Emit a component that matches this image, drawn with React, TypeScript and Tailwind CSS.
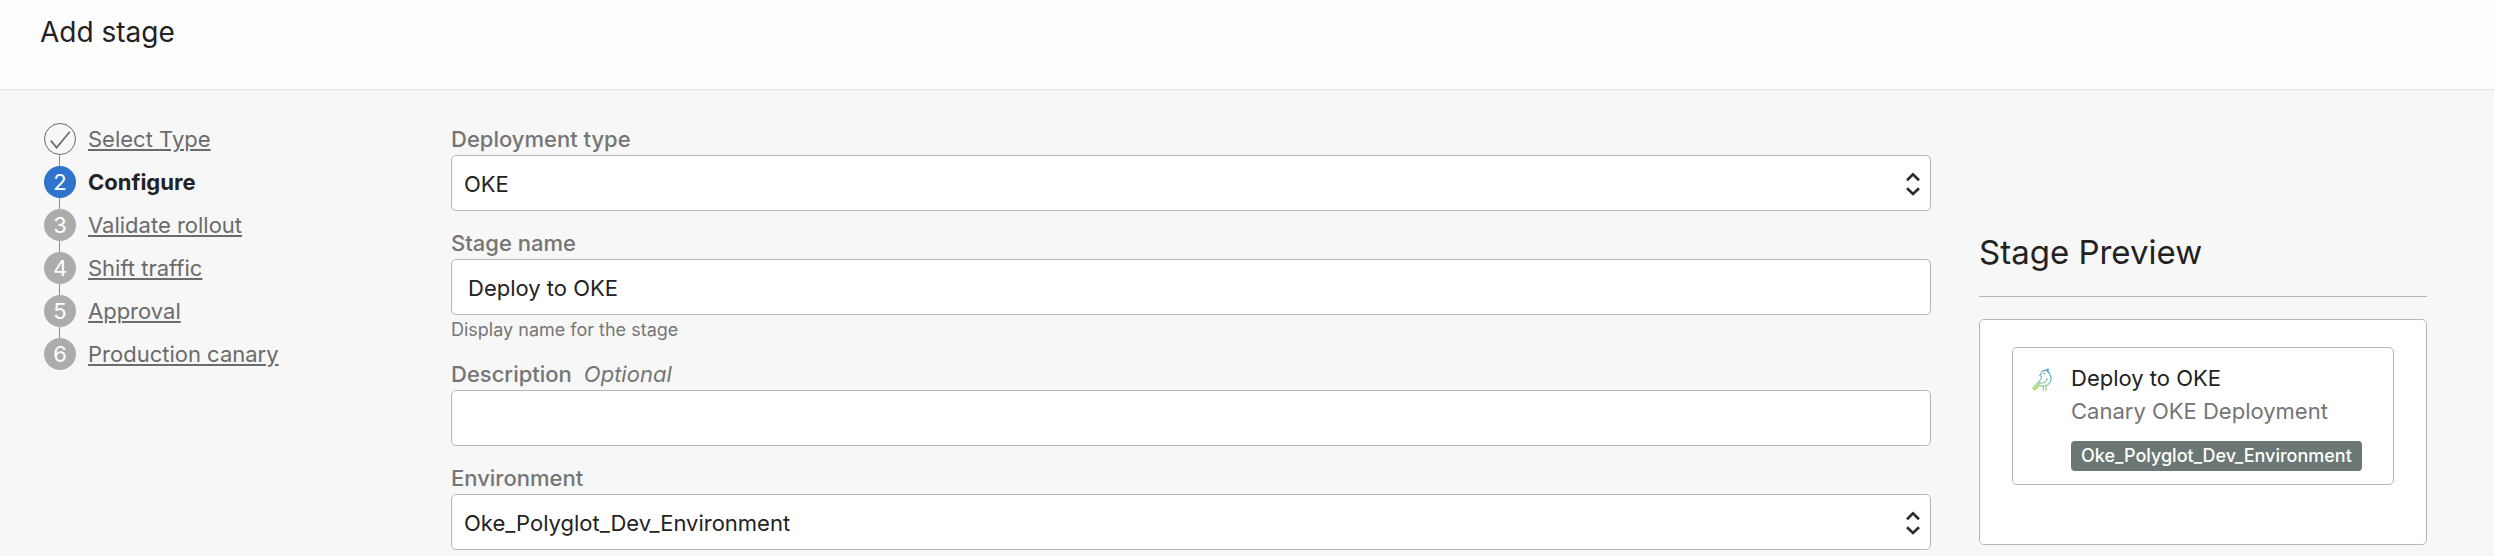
import React, { useState } from "react";

const steps = ["Select Type", "Configure", "Validate rollout", "Shift traffic", "Approval", "Production canary"];

function StepMarker({ index, current }: { index: number; current: number }) {
  if (index < current) {
    return (
      <svg viewBox="0 0 32 32" className="size-8 shrink-0" fill="none" stroke="#6b6b6b" aria-label="Completed">
        <circle cx="16" cy="16" r="15.5" />
        <path d="M6.8 17.6 L12.6 24.6 L25.8 8.8" strokeWidth="1.7" />
      </svg>
    );
  }
  const tone = index === current ? "bg-[#2e73cc]" : "bg-[#acacac]";
  return (
    <span className={`flex size-8 shrink-0 items-center justify-center rounded-full text-[22px] leading-8 text-white ${tone}`}>
      {index + 1}
    </span>
  );
}

function Steps({ current }: { current: number }) {
  return (
    <nav aria-label="Stage steps" className="w-[407px] shrink-0">
      <ol>
        {steps.map((step, i) => (
          <li key={step}>
            {i > 0 && <div className="ml-[15px] h-[11px] w-px bg-[#8c8c8c]" />}
            <div className="flex items-center gap-3">
              <StepMarker index={i} current={current} />
              {i === current ? (
                <span aria-current="step" className="text-[22px] leading-8 font-bold text-[#222]">{step}</span>
              ) : (
                <a href="#" className="text-[22px] leading-8 text-[#6b6b6b] underline">{step}</a>
              )}
            </div>
          </li>
        ))}
      </ol>
    </nav>
  );
}

const fieldBox =
  "block h-14 w-full rounded-[5px] border border-[#b3b8bf] bg-white pt-0.5 text-[22px] text-[#222] outline-none focus:border-[#2e73cc]";

function Field({ id, label, optional, hint, children }: {
  id: string;
  label: string;
  optional?: boolean;
  hint?: string;
  children: React.ReactNode;
}) {
  return (
    <div>
      <label htmlFor={id} className="flex gap-3 text-[22px] leading-8 font-medium text-[#757575]">
        {label}
        {optional && <em className="font-normal">Optional</em>}
      </label>
      {children}
      {hint && <p className="pt-0.5 text-[18px] leading-[25px] text-[#757575]">{hint}</p>}
    </div>
  );
}

function Select({ id, options }: { id: string; options: string[] }) {
  return (
    <div className="relative">
      <select id={id} className={`${fieldBox} appearance-none pr-12 pl-3`}>
        {options.map((o) => (
          <option key={o}>{o}</option>
        ))}
      </select>
      <svg
        viewBox="0 0 14 24"
        className="pointer-events-none absolute top-[17px] right-[11px] h-6 w-[14px]"
        fill="none"
        stroke="#2b2b2b"
        strokeWidth="2.6"
      >
        <path d="M1 8.2 L7 2.4 L13 8.2" />
        <path d="M1 16.2 L7 22 L13 16.2" />
      </svg>
    </div>
  );
}

function CanaryIcon() {
  return (
    <svg viewBox="0 0 20 24" className="mt-5 h-6 w-5 shrink-0" fill="none" stroke="url(#canary)" strokeWidth="1.2" strokeLinejoin="round" strokeLinecap="round">
      <defs>
        <linearGradient id="canary" x1="15" y1="1" x2="3" y2="22" gradientUnits="userSpaceOnUse">
          <stop offset="0" stopColor="#5b9fe0" />
          <stop offset="0.5" stopColor="#7cc3b4" />
          <stop offset="1" stopColor="#b4dc60" />
        </linearGradient>
      </defs>
      <path d="M16 1 C15.4 2 14.5 2.4 12.8 2.4 C10.4 2.4 8.8 4.2 9.2 6.3 L7.6 7.4 L9.6 8.6 C9.8 11 8 12.4 6.5 14 L0.9 20 L2.8 22 L7.4 17.4 C13.2 19.6 19 16.2 19 10.6 C19 7.6 17.8 5.4 15.8 3.6 Z" />
      <path d="M14.2 2.6 L16 1 L15.8 3.6 Z" fill="#5b9fe0" />
      <path d="M7.2 14.4 C11 16 14.8 14.2 15.2 10.6 M2 21 L8 14.8 M11.4 18.4 V22.8 M14 18 V22.8" />
      <circle cx="12.2" cy="5.4" r="0.4" />
    </svg>
  );
}

export default function App() {
  const [name, setName] = useState("Deploy to OKE");
  return (
    <div className="min-h-screen bg-[#f7f7f7] font-['Inter',sans-serif] text-[#222]">
      <header className="border-b border-[#e0e0e0] bg-[#fdfdfd] px-10 pt-3 pb-[37px]">
        <h1 className="text-[28px] leading-10">Add stage</h1>
      </header>
      <main className="flex items-start pt-[33px] pr-[67px] pb-[6px] pl-11">
        <Steps current={1} />
        <form className="flex min-w-0 flex-1 flex-col gap-4">
          <Field id="type" label="Deployment type">
            <Select id="type" options={["OKE"]} />
          </Field>
          <Field id="name" label="Stage name" hint="Display name for the stage">
            <input id="name" type="text" value={name} onChange={(e) => setName(e.target.value)} className={`${fieldBox} px-4`} />
          </Field>
          <Field id="description" label="Description" optional>
            <input id="description" type="text" className={`${fieldBox} px-4`} />
          </Field>
          <Field id="environment" label="Environment">
            <Select id="environment" options={["Oke_Polyglot_Dev_Environment"]} />
          </Field>
        </form>
        <aside className="ml-12 w-[448px] shrink-0 pt-[105px]">
          <h2 className="border-b border-[#b3b8bf] pb-5 text-[33px] leading-[48px]">Stage Preview</h2>
          <div className="mt-[22px] rounded-[5px] border border-[#b3b8bf] bg-white px-8 pt-[27px] pb-[59px]">
            <article className="flex gap-[19px] rounded-[5px] border border-[#b3b8bf] pb-[13px] pl-[19px]">
              <CanaryIcon />
              <div className="pt-[14px]">
                <h3 className="text-[22px] leading-[33px]">{name}</h3>
                <p className="text-[22px] leading-[33px] text-[#757575]">Canary OKE Deployment</p>
                <span className="mt-[13px] block w-max rounded bg-[#6b7775] px-[10px] text-[18px] leading-[30px] font-medium text-white">
                  Oke_Polyglot_Dev_Environment
                </span>
              </div>
            </article>
          </div>
        </aside>
      </main>
    </div>
  );
}
